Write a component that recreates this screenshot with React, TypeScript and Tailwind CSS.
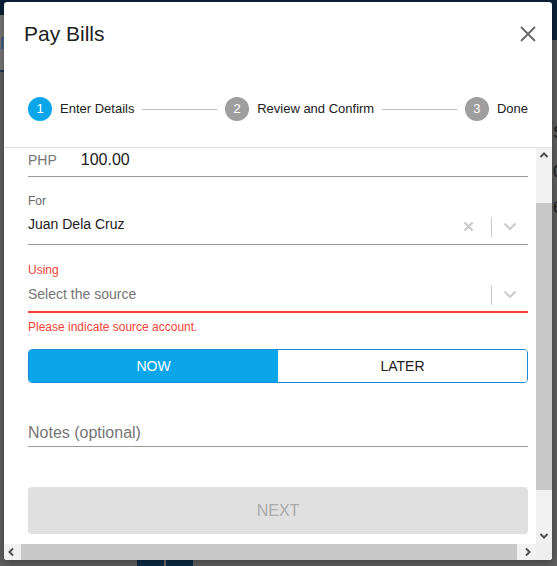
import React from "react";

const font = { fontFamily: '"Liberation Sans", Arial, sans-serif' };

function Chevron({ dir, className }: { dir: "up" | "down" | "left" | "right"; className?: string }) {
  const d = {
    up: "M1.5 6 L5 2.5 L8.5 6",
    down: "M1.5 3 L5 6.5 L8.5 3",
    left: "M6 1.5 L2.5 5 L6 8.5",
    right: "M3 1.5 L6.5 5 L3 8.5",
  }[dir];
  return (
    <svg width="10" height="10" viewBox="0 0 10 10" className={className}>
      <path d={d} fill="none" stroke="currentColor" strokeWidth="2" />
    </svg>
  );
}

function SelectIndicators({ clearable }: { clearable?: boolean }) {
  return (
    <div className="flex h-full items-center">
      {clearable && (
        <div className="flex w-5 justify-center text-[#cccccc]">
          <svg width="11" height="11" viewBox="0 0 11 11">
            <path d="M1.5 1.5 L9.5 9.5 M9.5 1.5 L1.5 9.5" stroke="currentColor" strokeWidth="2.4" />
          </svg>
        </div>
      )}
      {clearable && <div className="w-[13px]" />}
      <div className="h-5 w-px bg-[#cccccc]" />
      <div className="flex w-[36px] justify-center text-[#cccccc]">
        <svg width="14" height="9" viewBox="0 0 14 9">
          <path d="M1.5 1.5 L7 7 L12.5 1.5" fill="none" stroke="currentColor" strokeWidth="2" />
        </svg>
      </div>
    </div>
  );
}

function Step({ n, label, active }: { n: number; label: string; active?: boolean }) {
  return (
    <div className="flex shrink-0 items-center">
      <div
        className={`flex h-6 w-6 items-center justify-center rounded-full text-[13px] text-white ${
          active ? "bg-[#0aa6e9]" : "bg-[#9e9e9e]"
        }`}
      >
        {n}
      </div>
      <span className="ml-2 text-[13px] text-[#212121]">{label}</span>
    </div>
  );
}

export default function App() {
  return (
    <div className="relative h-[566px] w-[557px] overflow-hidden bg-[#5f5f5f]" style={font}>
      {/* dimmed page behind the dialog */}
      <div className="absolute left-0 top-0 h-[15px] w-full bg-[#0b2238]" />
      <div className="absolute left-0 top-[15px] h-[55px] w-[4px] bg-[#777777]" />
      <div className="absolute left-0 top-[36px] text-[16px] leading-none text-[#2a5c8c]">P</div>
      <div className="absolute left-0 top-[70px] h-[2px] w-[4px] bg-[#1d3a5a]" />
      <div className="absolute right-0 top-[15px] h-[25px] w-[5px] bg-[#0b2238]" />
      <div className="absolute left-[553px] top-[124px] text-[17px] leading-none text-[#1a1a1a]">S</div>
      <div className="absolute left-[553px] top-[163px] text-[17px] leading-none text-[#1a1a1a]">0</div>
      <div className="absolute left-[553px] top-[199px] text-[17px] leading-none text-[#1a1a1a]">6</div>
      <div className="absolute left-[137px] top-[560px] h-[6px] w-[56px] bg-[#0c2a45]" />
      <div className="absolute left-[164px] top-[560px] h-[6px] w-[2px] bg-[#6a6a6a]" />

      {/* dialog */}
      <div className="absolute left-[4px] top-[2px] flex h-[558px] w-[548px] flex-col overflow-hidden rounded-[3px] bg-white shadow-[0_2px_10px_rgba(0,0,0,0.35)]">
        <div className="flex h-[146px] shrink-0 flex-col border-b border-[#e0e0e0]">
          <div className="flex items-center justify-between pl-5 pr-4 pt-[18px]">
            <h2 className="text-[21px] leading-7 text-[#212121]">Pay Bills</h2>
            <svg width="16" height="16" viewBox="0 0 16 16" className="text-[#666666]">
              <path d="M1 1 L15 15 M15 1 L1 15" stroke="currentColor" strokeWidth="1.8" />
            </svg>
          </div>
          <div className="mt-[49px] flex items-center px-6">
            <Step n={1} label="Enter Details" active />
            <div className="mx-2 h-px flex-1 bg-[#bdbdbd]" />
            <Step n={2} label="Review and Confirm" />
            <div className="mx-2 h-px flex-1 bg-[#bdbdbd]" />
            <Step n={3} label="Done" />
          </div>
        </div>

        <div className="flex min-h-0 flex-1">
          <div className="min-w-0 flex-1 overflow-hidden">
            <div className="w-[548px] px-6">
              <div className="flex h-[29px] items-center gap-[24px] border-b border-[#999999] pb-1">
                <span className="text-[14px] text-[#757575]">PHP</span>
                <span className="text-[16px] text-[#212121]">100.00</span>
              </div>

              <div className="mt-[16px] text-[12px] leading-4 text-[#666666]">For</div>
              <div className="flex h-[36px] items-center border-b border-[#999999]">
                <span className="flex-1 pb-1 text-[14px] text-[#212121]">Juan Dela Cruz</span>
                <SelectIndicators clearable />
              </div>

              <div className="mt-[17px] text-[12px] leading-4 text-[#f44336]">Using</div>
              <div className="flex h-[35px] items-center border-b-2 border-[#f44336]">
                <span className="flex-1 text-[14px] text-[#757575]">Select the source</span>
                <SelectIndicators />
              </div>
              <div className="mt-[6px] text-[12px] leading-4 text-[#f44336]">Please indicate source account.</div>

              <div className="mt-[14px] flex h-[34px] overflow-hidden rounded-[4px] border border-[#1788cf] text-[14px]">
                <div className="flex flex-1 items-center justify-center bg-[#0aa6e9] text-white">NOW</div>
                <div className="flex flex-1 items-center justify-center bg-white text-[#212121]">LATER</div>
              </div>

              <div className="mt-[32px] flex h-[32px] items-center border-b border-[#999999] pt-1 text-[16px] text-[#757575]">
                Notes (optional)
              </div>

              <div className="mt-[40px] flex h-[47px] items-center justify-center rounded-[4px] bg-[#e0e0e0] text-[16px] text-[#ababab]">
                NEXT
              </div>
              <div className="h-[40px]" />
            </div>
          </div>

          <div className="flex w-4 shrink-0 flex-col bg-[#f1f1f1] text-[#505050]">
            <div className="flex h-4 items-center justify-center">
              <Chevron dir="up" />
            </div>
            <div className="flex-1">
              <div className="mt-[39px] h-[287px] bg-[#c8c8c8]" />
            </div>
            <div className="flex h-4 items-center justify-center">
              <Chevron dir="down" />
            </div>
          </div>
        </div>

        <div className="flex h-4 shrink-0 text-[#505050]">
          <div className="flex flex-1 bg-[#f1f1f1]">
            <div className="flex w-4 items-center justify-center">
              <Chevron dir="left" />
            </div>
            <div className="flex-1">
              <div className="ml-px h-4 w-[496px] bg-[#c8c8c8]" />
            </div>
            <div className="flex w-4 items-center justify-center">
              <Chevron dir="right" />
            </div>
          </div>
          <div className="w-4 bg-[#eeeeee]" />
        </div>
      </div>
    </div>
  );
}
